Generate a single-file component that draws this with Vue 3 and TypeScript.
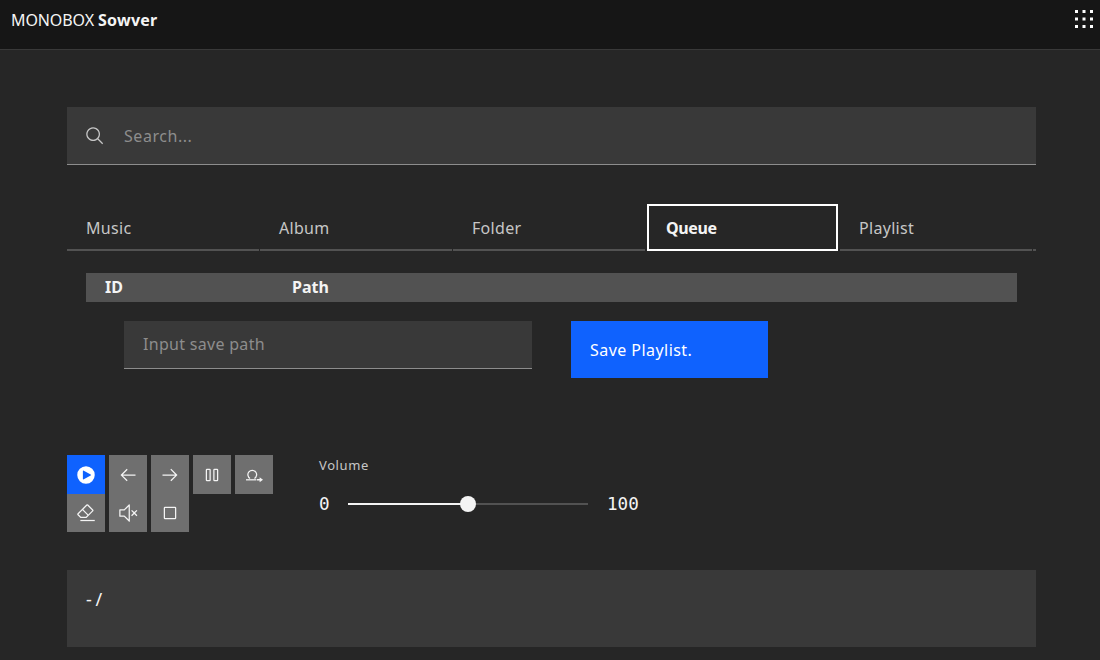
<script setup lang="ts">
const tabs = [
  { label: "Music", active: false },
  { label: "Album", active: false },
  { label: "Folder", active: false },
  { label: "Queue", active: true },
  { label: "Playlist", active: false },
]

const switcherDots = [4, 14, 24]
</script>

<template>
  <div class="page">
    <header class="topbar">
      <span class="brand">MONOBOX <b>Sowver</b></span>
      <svg class="switcher" width="24" height="24" viewBox="0 0 32 32" fill="#fff">
        <template v-for="y in switcherDots" :key="y">
          <rect v-for="x in switcherDots" :key="x" :x="x" :y="y" width="4" height="4" />
        </template>
      </svg>
    </header>

    <main class="content">
      <div class="search">
        <svg width="20" height="20" viewBox="0 0 32 32" fill="#c6c6c6">
          <path d="M29 27.5859l-7.5521-7.5521a11.0177 11.0177 0 1 0-1.4141 1.4141L27.5859 29ZM4 13a9 9 0 1 1 9 9 9.01 9.01 0 0 1-9-9Z" />
        </svg>
        <span>Search...</span>
      </div>

      <nav class="tabs">
        <a v-for="tab in tabs" :key="tab.label" class="tab" :class="{ active: tab.active }">{{ tab.label }}</a>
        <i class="tab-rest"></i>
      </nav>

      <div class="table-head">
        <span class="col-id">ID</span>
        <span>Path</span>
      </div>

      <div class="save-row">
        <div class="save-input">Input save path</div>
        <button class="save-btn">Save Playlist.</button>
      </div>

      <div class="player">
        <div class="controls">
          <div class="stack">
            <button class="ctl primary">
              <svg width="20" height="20" viewBox="0 0 32 32" fill="#fff"><path d="M16 2a14 14 0 1 0 14 14A14 14 0 0 0 16 2zm7.48 14.88l-11 6A1 1 0 0 1 11 22V10a1 1 0 0 1 1.48-.88l11 6a1 1 0 0 1 0 1.76z" /></svg>
            </button>
            <button class="ctl low">
              <svg width="20" height="20" viewBox="0 0 32 32" fill="#f4f4f4"><path d="M7 27H30V29H7z" /><path d="M27.38 10.51L19.45 2.59a2 2 0 0 0-2.83 0l-14 14a2 2 0 0 0 0 2.83L7.13 24h9.59L27.38 13.34a2 2 0 0 0 0-2.83zM15.89 22H8L4 18l6.31-6.31 7.93 7.92zm3.76-3.76l-7.92-7.93L18 4 26 11.93z" /></svg>
            </button>
          </div>
          <div class="stack">
            <button class="ctl">
              <svg width="20" height="20" viewBox="0 0 32 32" fill="#f4f4f4"><path d="M14 26l1.41-1.41L7.83 17H28V15H7.83l7.58-7.59L14 6 4 16 14 26z" /></svg>
            </button>
            <button class="ctl low">
              <svg width="20" height="20" viewBox="0 0 32 32" fill="#f4f4f4"><path d="M31 12.41L29.59 11 26 14.59 22.41 11 21 12.41 24.59 16 21 19.59 22.41 21 26 17.41 29.59 21 31 19.59 27.41 16 31 12.41zM18 30a1 1 0 0 1-.71-.3L9.67 22H3a1 1 0 0 1-1-1V11a1 1 0 0 1 1-1H9.67l7.62-7.7a1 1 0 0 1 1.41 0A1 1 0 0 1 19 3V29A1 1 0 0 1 18 30zM4 20h6a1.17 1.17 0 0 1 .79.3L17 26.57V5.43L10.79 11.7A1.17 1.17 0 0 1 10 12H4z" /></svg>
            </button>
          </div>
          <div class="stack">
            <button class="ctl">
              <svg width="20" height="20" viewBox="0 0 32 32" fill="#f4f4f4"><path d="M18 6L16.57 7.393 24.15 15 4 15 4 17 24.15 17 16.57 24.573 18 26 28 16 18 6z" /></svg>
            </button>
            <button class="ctl low">
              <svg width="20" height="20" viewBox="0 0 32 32" fill="#f4f4f4"><path d="M24 8V24H8V8H24m0-2H8A2 2 0 0 0 6 8V24a2 2 0 0 0 2 2H24a2 2 0 0 0 2-2V8a2 2 0 0 0-2-2z" /></svg>
            </button>
          </div>
          <button class="ctl">
            <svg width="20" height="20" viewBox="0 0 32 32" fill="#f4f4f4"><path d="M12 8V24H8V8h4m0-2H8A2 2 0 0 0 6 8V24a2 2 0 0 0 2 2h4a2 2 0 0 0 2-2V8a2 2 0 0 0-2-2zM24 8V24H20V8h4m0-2H20a2 2 0 0 0-2 2V24a2 2 0 0 0 2 2h4a2 2 0 0 0 2-2V8a2 2 0 0 0-2-2z" /></svg>
          </button>
          <button class="ctl">
            <svg width="20" height="20" viewBox="0 0 32 32" fill="#f4f4f4">
              <path d="M9.700 21.560A7 7 0 1 1 16.700 21.560" fill="none" stroke="#f4f4f4" stroke-width="2" />
              <path d="M3.200 22.700H19.500V24.700H3.200z" />
              <path d="M20.500 22.400H25V19.500L30.400 23.500 25 27.500V24.600H20.500z" />
            </svg>
          </button>
        </div>

        <div class="volume">
          <label>Volume</label>
          <div class="slider-row">
            <span class="min">0</span>
            <div class="track">
              <div class="fill" :style="{ width: '50%' }"></div>
              <div class="thumb" :style="{ left: '50%' }"></div>
            </div>
            <span>100</span>
          </div>
        </div>
      </div>

      <div class="now-playing">- /</div>
    </main>
  </div>
</template>

<style>
body {
  background: #262626;
  overflow: hidden;
}
</style>

<style scoped>
.page {
  height: 660px;
  background: #262626;
  color: #f4f4f4;
  font-family: "Noto Sans", "Open Sans", sans-serif;
  overflow: hidden;
}

.topbar {
  height: 50px;
  box-sizing: border-box;
  background: #161616;
  border-bottom: 1px solid #393939;
  display: flex;
  justify-content: space-between;
  padding: 7px 4px 0 11px;
}

.brand {
  font-size: 16px;
  line-height: 26px;
  letter-spacing: -0.1px;
}

.brand b {
  font-weight: 700;
  letter-spacing: 0.25px;
}

.content {
  padding: 57px 64px 0 67px;
}

.search {
  height: 56px;
  background: #393939;
  border-bottom: 1px solid #8d8d8d;
  display: flex;
  align-items: center;
  gap: 19px;
  padding: 1px 0 0 18px;
  color: #8d8d8d;
  font-size: 16px;
  letter-spacing: 0.55px;
}

.tabs {
  display: flex;
  gap: 1px;
  margin-top: 39px;
  height: 47px;
  align-items: stretch;
}

.tab {
  width: 192px;
  box-sizing: border-box;
  border-bottom: 2px solid #525252;
  color: #c6c6c6;
  font-size: 16px;
  line-height: 48px;
  padding-left: 19px;
  letter-spacing: 0.3px;
}

.tab.active {
  border: 2px solid #fff;
  margin: 0 1px;
  width: 191px;
  color: #f4f4f4;
  font-weight: 700;
  line-height: 44px;
  padding-left: 17px;
  letter-spacing: -0.4px;
}

.tab-rest {
  flex: 1;
  border-bottom: 2px solid #525252;
}

.table-head {
  margin: 22px 19px 0;
  height: 29px;
  background: #525252;
  display: flex;
  align-items: center;
  padding-bottom: 1px;
  box-sizing: border-box;
  font-size: 16px;
  font-weight: 700;
}

.col-id {
  width: 206px;
  padding-left: 19px;
  box-sizing: border-box;
}

.save-row {
  display: flex;
  margin: 19px 0 0 57px;
  gap: 39px;
}

.save-input {
  width: 389px;
  height: 47px;
  background: #393939;
  border-bottom: 1px solid #8d8d8d;
  color: #8d8d8d;
  font-size: 16px;
  line-height: 47px;
  padding-left: 19px;
  letter-spacing: 0.3px;
}

.save-btn {
  width: 197px;
  height: 57px;
  background: #0f62fe;
  border: 0;
  color: #fff;
  font-family: inherit;
  font-size: 16px;
  letter-spacing: 0.45px;
  text-align: left;
  padding: 0 0 0 19px;
}

.player {
  display: flex;
  margin-top: 77px;
  gap: 46px;
  align-items: flex-start;
}

.controls {
  display: flex;
  align-items: flex-start;
  gap: 4px;
}

.stack {
  display: flex;
  flex-direction: column;
}

.ctl {
  width: 38px;
  height: 39px;
  background: #6f6f6f;
  border: 0;
  padding: 0;
  display: flex;
  align-items: center;
  justify-content: center;
}

.ctl.low {
  height: 38px;
}

.ctl.primary {
  background: #0f62fe;
}

.volume label {
  display: block;
  color: #c6c6c6;
  font-size: 13px;
  line-height: 16px;
  letter-spacing: 0.6px;
  margin-top: 2px;
}

.slider-row {
  display: flex;
  align-items: center;
  margin-top: 19px;
  font-family: "DejaVu Sans Mono", monospace;
  font-size: 17.6px;
  height: 24px;
}

.min {
  width: 29px;
}

.track {
  position: relative;
  width: 240px;
  height: 2px;
  background: #525252;
  margin-right: 19px;
}

.fill {
  height: 2px;
  background: #f4f4f4;
}

.thumb {
  position: absolute;
  top: -7px;
  width: 16px;
  height: 16px;
  margin-left: -8px;
  border-radius: 50%;
  background: #f4f4f4;
}

.now-playing {
  height: 77px;
  margin-top: 38px;
  background: #393939;
  padding: 15px 0 0 19px;
  box-sizing: border-box;
  font-size: 18px;
  line-height: 28px;
  word-spacing: -1px;
}
</style>
